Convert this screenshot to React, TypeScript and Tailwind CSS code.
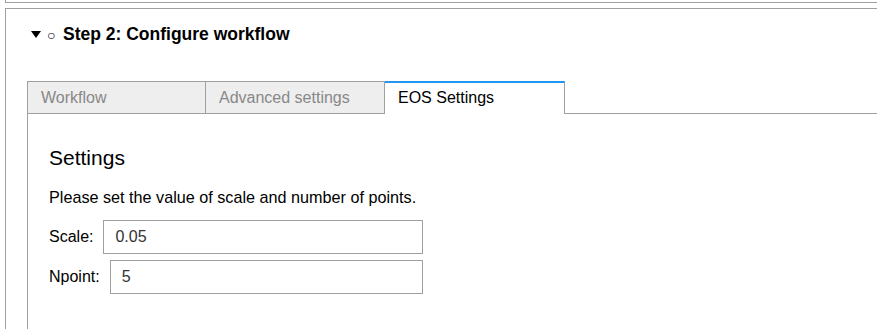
export default function App() {
  return (
    <div className="h-[329px] bg-white font-['Liberation_Sans',Arial,sans-serif] text-black overflow-hidden">
      <div className="ml-[5px] h-[3px] border-l border-b border-[#a0a0a0]" />
      <div className="ml-[5px] mt-[5px] border-l border-t border-[#a0a0a0] pl-[21px] pb-8">
        <div className="flex items-center pl-[4px] pt-[3px] h-[48px] text-[17.5px] font-bold leading-none">
          <svg width="10" height="7" viewBox="0 0 10 7" className="mr-[6px]">
            <path d="M0 0 H10 L5 7 Z" fill="black" />
          </svg>
          <span className="font-normal text-[14px] w-[16px]">○</span>
          <span>Step 2: Configure workflow</span>
        </div>
        <div className="mt-[24px] flex h-[33px] text-[16px]">
          <div className="w-[179px] border border-b border-[#a0a0a0] bg-[#eeeeee] text-[#888888] pl-[13px] flex items-center">Workflow</div>
          <div className="w-[179px] border-y border-r border-[#a0a0a0] bg-[#eeeeee] text-[#888888] pl-[13px] flex items-center">Advanced settings</div>
          <div className="w-[180px] border-t-2 border-t-[#2196f3] border-r border-r-[#a0a0a0] bg-white pl-[13px] flex items-center pb-[1px]">EOS Settings</div>
          <div className="flex-1 border-b border-[#a0a0a0]" />
        </div>
        <div className="border-l border-[#a0a0a0] pl-[21px] pt-[33px] pb-16">
          <h2 className="text-[21px] leading-none mb-[21px]">Settings</h2>
          <p className="text-[16.2px] leading-none mb-[15px]">Please set the value of scale and number of points.</p>
          <div className="flex items-center gap-[10px] mb-[6px] text-[16px]">
            <label>Scale:</label>
            <input className="w-[320px] h-[34px] border border-[#a0a0a0] px-[11px] text-[16px] text-[#333] outline-none" defaultValue="0.05" />
          </div>
          <div className="flex items-center gap-[10px] text-[16px]">
            <label>Npoint:</label>
            <input className="w-[313px] h-[34px] border border-[#a0a0a0] px-[11px] text-[16px] text-[#333] outline-none" defaultValue="5" />
          </div>
        </div>
      </div>
    </div>
  )
}
